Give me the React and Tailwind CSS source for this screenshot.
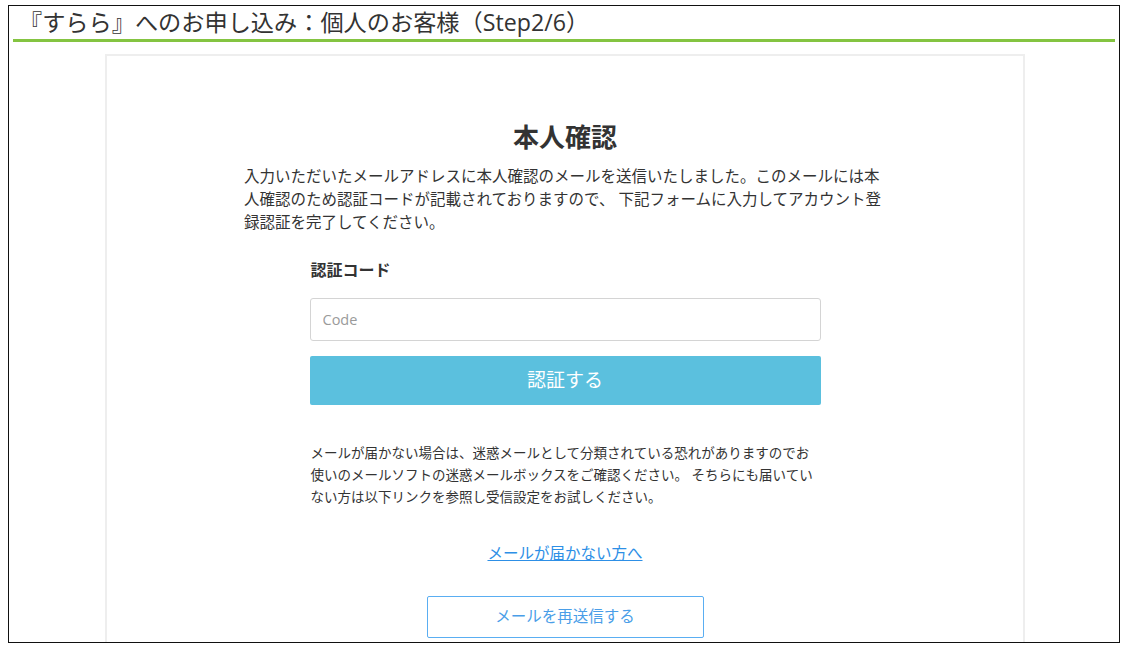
export default function App() {
  return (
    <div className="min-h-[647px] bg-white pt-[5px] pl-[8px] font-['Open_Sans','Noto_Sans_CJK_JP',sans-serif] text-[#333]">
      <div className="flex h-[638px] w-[1112px] flex-col overflow-hidden border border-[#111]">
        <header className="mx-[4px] border-b-[3px] border-[#84c441] pl-[6px]">
          <h1 className="text-[23.2px] leading-[33px] text-[#333]">『すらら』へのお申し込み：個人のお客様（Step2/6）</h1>
        </header>

        <main className="ml-[96px] mt-[12px] w-[920px] flex-1 border-2 border-b-0 border-[#eeeeee]">
          <div className="flex flex-col items-center pt-[63px]">
            <h2 className="text-[26px] font-bold leading-[36px] text-[#333]">本人確認</h2>
            <p className="mt-[10px] w-[642px] text-[15.5px] leading-[23px] text-[#333]">
              入力いただいたメールアドレスに本人確認のメールを送信いたしました。このメールには本
              <br />
              人確認のため認証コードが記載されておりますので、 下記フォームに入力してアカウント登
              <br />
              録認証を完了してください。
            </p>

            <form className="mt-[24px] flex w-[511px] flex-col" onSubmit={(e) => e.preventDefault()}>
              <label htmlFor="code" className="pl-[1px] text-[16px] font-bold leading-[24px]">認証コード</label>
              <input
                id="code"
                placeholder="Code"
                className="mt-[16px] h-[43px] w-full rounded-[3px] border border-[#d4d4d4] px-[12px] text-[14.5px] text-[#333] outline-none placeholder:text-[#9a9a9a]"
              />
              <button type="submit" className="mt-[15px] h-[49px] w-full rounded-[2px] bg-[#5bc0de] text-[19px] text-white">
                認証する
              </button>

              <p className="mt-[37px] whitespace-nowrap pl-[1px] text-[13.5px] leading-[22px] text-[#333]">
                メールが届かない場合は、迷惑メールとして分類されている恐れがありますのでお
                <br />
                使いのメールソフトの迷惑メールボックスをご確認ください。 そちらにも届いてい
                <br />
                ない方は以下リンクを参照し受信設定をお試しください。
              </p>
            </form>

            <a href="#" className="mt-[34px] text-[15.5px] leading-[22px] text-[#2d8fe6] underline">
              メールが届かない方へ
            </a>

            <button type="button" className="mt-[32px] h-[42px] w-[277px] rounded-[2px] border border-[#5aaef2] text-[15.5px] text-[#4a9ee8]">
              メールを再送信する
            </button>
          </div>
        </main>
      </div>
    </div>
  );
}
